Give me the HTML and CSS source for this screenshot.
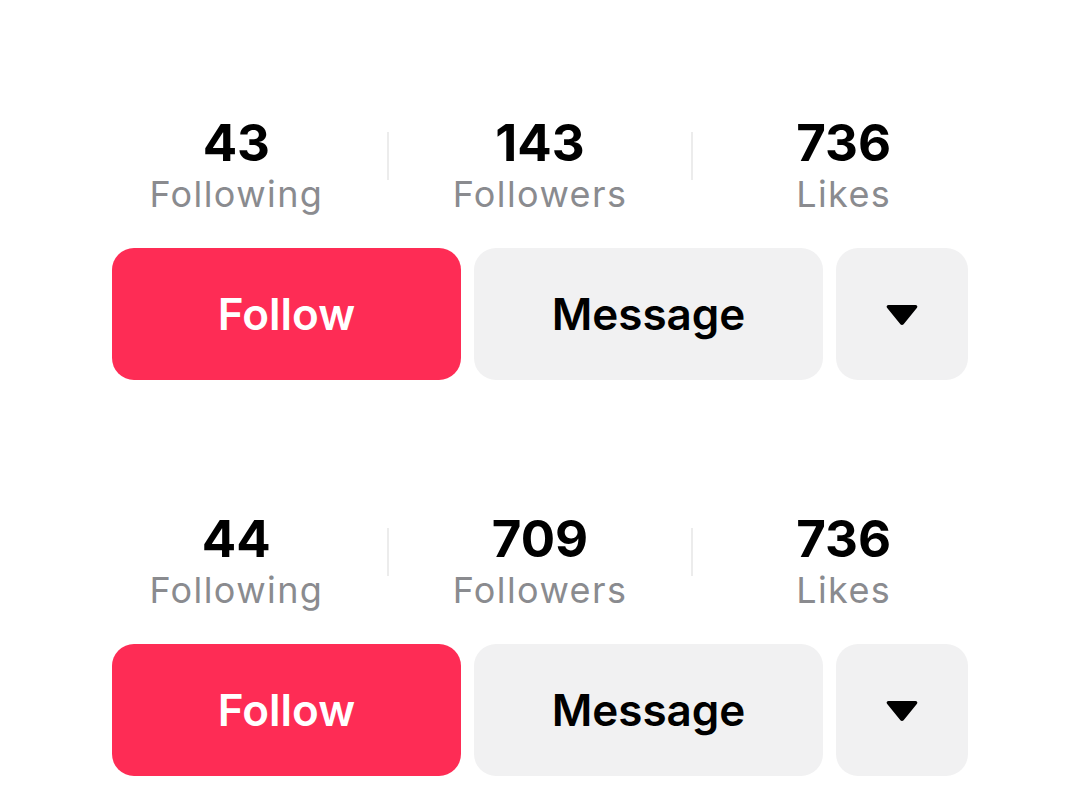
FILE: index.html
```html
<!DOCTYPE html>
<html lang="en">
<head>
    <meta charset="UTF-8">
    <meta name="viewport" content="width=device-width, initial-scale=1.0">
    <title>Profile Stats</title>
    <link rel="stylesheet" href="styles.css">
</head>
<body>
    <div class="page">
        <div class="profile">
            <div class="stats">
                <div class="stat">
                    <div class="stat-number">43</div>
                    <div class="stat-label">Following</div>
                </div>
                <div class="divider"></div>
                <div class="stat">
                    <div class="stat-number">143</div>
                    <div class="stat-label">Followers</div>
                </div>
                <div class="divider"></div>
                <div class="stat">
                    <div class="stat-number">736</div>
                    <div class="stat-label">Likes</div>
                </div>
            </div>
            <div class="actions">
                <button class="btn btn-follow">Follow</button>
                <button class="btn btn-message">Message</button>
                <button class="btn btn-more" aria-label="More">
                    <svg width="32" height="22" viewBox="0 0 32 22"><path d="M2.5 1h27c1.6 0 2.4 1.6 1.5 2.8L17.6 20.2c-0.8 1-2.4 1-3.2 0L1 3.8C0.1 2.6 0.9 1 2.5 1z" fill="#000"/></svg>
                </button>
            </div>
        </div>

        <div class="profile">
            <div class="stats">
                <div class="stat">
                    <div class="stat-number">44</div>
                    <div class="stat-label">Following</div>
                </div>
                <div class="divider"></div>
                <div class="stat">
                    <div class="stat-number">709</div>
                    <div class="stat-label">Followers</div>
                </div>
                <div class="divider"></div>
                <div class="stat">
                    <div class="stat-number">736</div>
                    <div class="stat-label">Likes</div>
                </div>
            </div>
            <div class="actions">
                <button class="btn btn-follow">Follow</button>
                <button class="btn btn-message">Message</button>
                <button class="btn btn-more" aria-label="More">
                    <svg width="32" height="22" viewBox="0 0 32 22"><path d="M2.5 1h27c1.6 0 2.4 1.6 1.5 2.8L17.6 20.2c-0.8 1-2.4 1-3.2 0L1 3.8C0.1 2.6 0.9 1 2.5 1z" fill="#000"/></svg>
                </button>
            </div>
        </div>
    </div>
</body>
</html>
```

FILE: styles.css
```css
body {
    font-family: 'Inter', 'Roboto', sans-serif;
    background-color: #ffffff;
    margin: 0;
    padding: 0;
}

.page {
    display: flex;
    flex-direction: column;
    align-items: center;
    gap: 131px;
    padding-top: 115px;
}

.profile {
    display: flex;
    flex-direction: column;
    align-items: center;
}

.stats {
    display: flex;
    align-items: flex-start;
    width: 909px;
}

.stat {
    flex: 1;
    text-align: center;
}

.stat-number {
    font-size: 51px;
    line-height: 56px;
    font-weight: 700;
    color: #000000;
}

.stat-label {
    margin-top: 2px;
    font-size: 36px;
    line-height: 42px;
    color: #8a8b8f;
    letter-spacing: 1.4px;
}

.divider {
    width: 2px;
    height: 48px;
    margin-top: 17px;
    background-color: #ececec;
}

.actions {
    display: flex;
    gap: 13px;
    margin-top: 33px;
}

.btn {
    display: flex;
    align-items: center;
    justify-content: center;
    height: 132px;
    border: none;
    border-radius: 22px;
    font-family: 'Inter', 'Roboto', sans-serif;
    font-size: 44px;
    font-weight: 600;
    padding: 0;
    cursor: pointer;
}

.btn-follow {
    width: 349px;
    background-color: #fe2c55;
    color: #ffffff;
}

.btn-message {
    width: 349px;
    background-color: #f1f1f2;
    color: #000000;
}

.btn-more {
    width: 132px;
    background-color: #f1f1f2;
}

.btn-more svg {
    margin-top: 2px;
}
```
